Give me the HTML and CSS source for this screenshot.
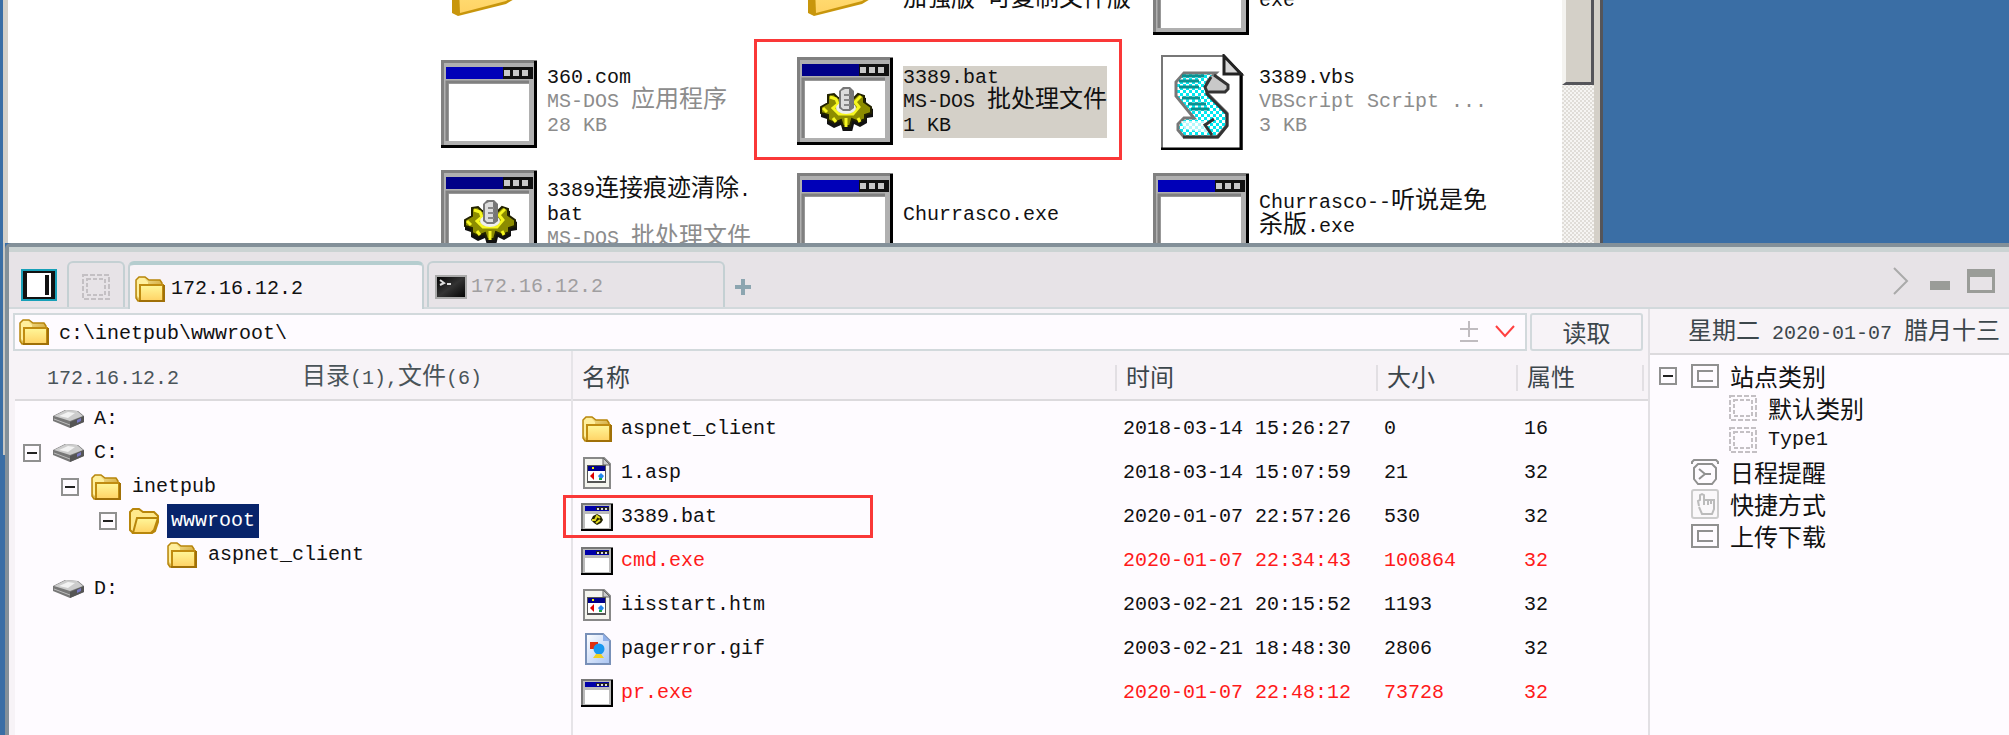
FILE: index.html
```html
<!DOCTYPE html>
<html lang="zh-CN">
<head>
<meta charset="utf-8">
<title>172.16.12.2</title>
<link rel="stylesheet" href="styles.css">
</head>
<body>
<svg class="defs" aria-hidden="true">
  <defs>
    <linearGradient id="gold" x1="0" y1="0" x2="0" y2="1"><stop offset="0" stop-color="#fff79a"/><stop offset="1" stop-color="#ffd264"/></linearGradient>
    <linearGradient id="goldBack" x1="0" y1="0" x2="1" y2="1"><stop offset="0" stop-color="#fff3a8"/><stop offset="1" stop-color="#c08a10"/></linearGradient>
    <linearGradient id="paper" x1="0" y1="0" x2="1" y2="1"><stop offset="0" stop-color="#fff"/><stop offset="1" stop-color="#a9c4f2"/></linearGradient>
    <linearGradient id="screen" x1="0" y1="0" x2="1" y2="1"><stop offset="0" stop-color="#000"/><stop offset=".5" stop-color="#333"/><stop offset="1" stop-color="#000"/></linearGradient>
    <pattern id="weave" width="6" height="6" patternUnits="userSpaceOnUse"><rect width="6" height="6" fill="#fff"/><rect width="3" height="3" fill="#00e8f0"/><rect x="3" y="3" width="3" height="3" fill="#00e8f0"/></pattern>
    <symbol id="frame" viewBox="0 0 96 88">
      <rect width="96" height="88" fill="#808080"/><rect x="3" y="3" width="90" height="82" fill="#b0b0b0"/>
      <path d="M93 1h3v87H0v-3h93z" fill="#000"/>
      <path d="M6 81V22h82" fill="none" stroke="#808080" stroke-width="3"/>
      <rect x="8" y="24" width="80" height="57" fill="#fff"/>
    </symbol>
    <symbol id="buttons" viewBox="0 0 30 12">
      <rect width="30" height="12" fill="#111"/><path d="M1 3h6v6H1zM10 3h6v6h-6zM19 3h6v6h-6z" fill="#c8c8c8"/>
    </symbol>
    <symbol id="exe" viewBox="0 0 96 96">
      <use href="#frame" y="6" width="96" height="88"/><rect x="5" y="13" width="86" height="12" fill="#0000b8"/><use href="#buttons" x="62" y="13" width="30" height="12"/>
    </symbol>
    <symbol id="gear" viewBox="0 0 54 44">
      <path d="M9 9l6-1 4 4h16l4-4 7 2v6l7 5v8l-6 1v5l-7 4-6-3-2 8h-9l-2-7-7 3-7-4v-5l-6-2v-8l6-4z" fill="#111" transform="translate(1 1)"/>
      <path d="M9 8l6-1 4 4h16l4-4 6 2v6l7 5v6l-6 2v4l-6 3-7-3-2 7h-7l-2-6-7 3-6-3v-5l-7-2v-6l7-4z" fill="#8c8c00" stroke="#222200" stroke-width="2"/>
      <path d="M11 10l6 2 2 5-5 4 6 6h14l6-7-4-5 6-6M4 21l4 4M14 31l3 4M27 31v9M39 31l2 4" fill="none" stroke="#f6f620" stroke-width="3"/>
      <ellipse cx="27" cy="21" rx="10" ry="6" fill="#eee"/>
      <path d="M20 4l4-4h7l4 4v17l-4 3h-7l-4-3z" fill="#777"/><path d="M22 4l4-2h4v20h-6l-2-2z" fill="#ddd"/><path d="M25 8h6M25 13h6M25 18h6" stroke="#888" stroke-width="2"/>
    </symbol>
    <symbol id="bat" viewBox="0 0 96 96">
      <use href="#frame" y="3" width="96" height="88"/><rect x="5" y="10" width="86" height="12" fill="#000088"/><use href="#buttons" x="62" y="10" width="30" height="12"/><use href="#gear" x="22" y="33" width="54" height="44"/>
    </symbol>
    <symbol id="vbs" viewBox="0 0 96 96">
      <path d="M9 2h61l19 18v75H9z" fill="#fff" stroke="#777" stroke-width="2"/><path d="M88 19v76H8" fill="none" stroke="#000" stroke-width="3"/>
      <path d="M71 2v18h17z" fill="#d8d8d8" stroke="#222" stroke-width="3"/>
      <path d="M31 19h32l-9 9v11l20 20v12L64 83H31l-6-7v-6l6-6h10L23 42V28z" fill="url(#weave)" stroke="#777" stroke-width="3"/>
      <path d="M28 67h24l3 12-24-4z" fill="#fff" opacity=".7"/>
      <path d="M29 22h22M26 27h20M26 33h20M29 44h18M35 50h18M38 55h18" stroke="#0a9090" stroke-width="3"/>
      <path d="M55 24l7-3 13 10-3 7H55l-2-6z" fill="#c8c8c8"/>
      <path d="M61 21l14 10v4l-3 3H54v2l20 20v12L65 83H30M54 38l-2-5 6-10M61 65l-9 6 7 10" fill="none" stroke="#333" stroke-width="3"/>
    </symbol>
    <symbol id="bigfolder" viewBox="0 0 96 96">
      <path d="M11 0v72l6 3 48-12 10-6 3-20V0z" fill="#c8960c"/><path d="M16 0l3 72 46-12 8-5V0z" fill="url(#gold)"/>
    </symbol>
    <symbol id="folder" viewBox="0 0 30 26">
      <path d="M1 4l3-3h6l4 3h11l2 3v18H3l-2-3z" fill="url(#goldBack)" stroke="#b8860b" stroke-width="1.5"/>
      <path d="M2 5l3-3h4l4 4v3l-7 1-2 12-2-2z" fill="#ffef9c"/>
      <path d="M5 9h23v16H5z" fill="url(#gold)" stroke="#c08c10" stroke-width="2"/><path d="M4 25h25V9" fill="none" stroke="#a07008" stroke-width="2"/>
    </symbol>
    <symbol id="open" viewBox="0 0 30 26">
      <path d="M1 4l3-3h6l4 3h11l4 4v6l-3 9-3 2H4l-3-3z" fill="#ffe98c" stroke="#b8860b" stroke-width="2"/>
      <path d="M8 10h21l-4 12-3 3H4z" fill="url(#gold)" stroke="#b8860b" stroke-width="2"/>
    </symbol>
    <symbol id="drive" viewBox="0 0 32 20">
      <path d="M0 7l12-6 13 1 6 5v6l-14 6L0 12z" fill="#777"/><path d="M1 7l12-6 11 1 6 5-13 5z" fill="#ccc"/><path d="M6 7l9-4 7 1-7 5z" fill="#f2f2f2"/>
      <path d="M17 13v6l14-6V7z" fill="#555"/><path d="M24 11l4-2v3l-4 2z" fill="#7777c0"/><path d="M1 10l16 6" stroke="#bbb"/>
    </symbol>
    <symbol id="sexe" viewBox="0 0 32 28">
      <path d="M0 0h32v28H0z" fill="#777"/><path d="M2 2h28v24H2z" fill="#bbb"/><path d="M30 1h2v27H0v-2h30z" fill="#000"/>
      <path d="M4 3h24v5H4z" fill="#0000a8"/><path d="M15 4h13v3H15z" fill="#222"/><path d="M16 5h2v2h-2zM20 5h2v2h-2zM24 5h2v2h-2z" fill="#ddd"/><path d="M4 11h24v14H4z" fill="#fff"/>
    </symbol>
    <symbol id="sbat" viewBox="0 0 32 28">
      <use href="#sexe" width="32" height="28"/><path d="M12 13l4-2 4 2 2 4-2 3-4 2-3-2-3-3z" fill="#222200"/><path d="M11 17h3l2-4 3 2M15 20l4-3" stroke="#e0d820" stroke-width="2" fill="none"/>
    </symbol>
    <symbol id="web" viewBox="0 0 32 32">
      <path d="M3 1h20l6 6v24H3z" fill="#f4f4ee" stroke="#888" stroke-width="2"/><path d="M22 1v7h7z" fill="#ccc" stroke="#666"/>
      <path d="M6 8h19v18H6z" fill="#555"/><path d="M7 14h17v10H7z" fill="#fff"/><path d="M7 9h17v5H7z" fill="#00008a"/><path d="M11 10h2v2h-2z" fill="#ee0"/>
      <path d="M9 19l4-4v8z" fill="#d00"/><path d="M17 19l3-3 3 3-3 4z" fill="#28e"/><path d="M18 21h3v2h-3z" fill="#1a4"/>
    </symbol>
    <symbol id="gif" viewBox="0 0 32 32">
      <path d="M5 1h17l7 7v23H5z" fill="url(#paper)" stroke="#7890b8" stroke-width="2"/><path d="M22 1v7h7z" fill="#8fb0e8"/>
      <path d="M9 9h8v7H9z" fill="#e03010"/><circle cx="18" cy="16" r="5.500" fill="#1898f0"/><path d="M12 25l3-4h5l3 4z" fill="#f0d020"/>
    </symbol>
    <symbol id="term" viewBox="0 0 32 24">
      <path d="M1 1h30v22H1z" fill="url(#screen)" stroke="#aaa" stroke-width="2"/><path d="M5 5l4 3-4 2M12 9h4" fill="none" stroke="#ddd" stroke-width="2"/>
    </symbol>
    <symbol id="dashed" viewBox="0 0 28 26">
      <g fill="none" stroke="#c4c0c4" stroke-width="2"><path d="M1 1h26v24H1z" stroke-dasharray="5 2"/><path d="M5 5h18v16H5z" stroke-dasharray="4 2"/></g>
    </symbol>
    <symbol id="cbox" viewBox="0 0 28 24">
      <path d="M1 1h26v22H1z" fill="none" stroke="#909090" stroke-width="2"/><path d="M22 7H7v10h15" fill="none" stroke="#909090" stroke-width="2"/>
    </symbol>
    <symbol id="clock" viewBox="0 0 28 26">
      <g fill="none" stroke="#909090" stroke-width="2"><path d="M1 5V3l2-2h22l2 2v2M7 5h14l4 4v11l-4 5H7l-4-5V9z"/><path d="M8 10l6 5-6 5M14 15h6"/></g>
    </symbol>
    <symbol id="hand" viewBox="0 0 28 30">
      <rect x="1" y="1" width="26" height="28" rx="2" fill="#faf8fa" stroke="#ccc" stroke-width="2"/>
      <path d="M8 17l-1-5 2-1V6l2-1 2 1v5h10v9l-2 5H11l-3-7M13 11v5M17 11v5M20 11v4" fill="none" stroke="#bbb" stroke-width="2"/>
    </symbol>
  </defs>
</svg>

<section class="explorer">
  <div class="files">
    <div class="tile"><svg class="big"><use href="#bigfolder"/></svg></div>
    <div class="tile"><svg class="big"><use href="#bigfolder"/></svg><div class="label"><br><span class="cj">加强版</span> <span class="cj">可复制文件版</span></div></div>
    <div class="tile"><svg class="big"><use href="#exe"/></svg><div class="label"><br>exe</div></div>

    <div class="tile"><svg class="big"><use href="#exe"/></svg><div class="label">360.com<div class="meta">MS-DOS <span class="cj">应用程序</span><br>28 KB</div></div></div>
    <div class="tile marked"><svg class="big"><use href="#bat"/></svg><div class="label picked">3389.bat<br>MS-DOS <span class="cj">批处理文件</span><br>1 KB</div></div>
    <div class="tile"><svg class="big"><use href="#vbs"/></svg><div class="label">3389.vbs<div class="meta">VBScript Script ...<br>3 KB</div></div></div>

    <div class="tile"><svg class="big"><use href="#bat"/></svg><div class="label">3389<span class="cj">连接痕迹清除</span>.<br>bat<div class="meta">MS-DOS <span class="cj">批处理文件</span></div></div></div>
    <div class="tile"><svg class="big"><use href="#exe"/></svg><div class="label">Churrasco.exe</div></div>
    <div class="tile"><svg class="big"><use href="#exe"/></svg><div class="label">Churrasco--<span class="cj">听说是免</span><br><span class="cj">杀版</span>.exe</div></div>
  </div>
  <div class="scroll"><div class="thumb"></div></div>
</section>

<div class="lower">
  <div class="gutter"></div>
  <main class="app">
    <header class="tabs">
      <button class="panel-btn" aria-label="面板"><svg width="36" height="32" viewBox="0 0 36 32"><path d="M1 1h34v30H1z" fill="#111" stroke="#18a0b8" stroke-width="2"/><path d="M6 4h24v24H6z" fill="#fff"/><path d="M24 6h4v20h-4z" fill="#111"/></svg></button>
      <button class="tab blank" aria-label="空白"><svg width="28" height="26"><use href="#dashed"/></svg></button>
      <button class="tab active"><svg width="30" height="26"><use href="#folder"/></svg>172.16.12.2</button>
      <button class="tab"><svg width="32" height="24"><use href="#term"/></svg>172.16.12.2</button>
      <button class="add" aria-label="新建"><svg width="16" height="16"><path d="M8 0v16M0 8h16" stroke="#8ca5b0" stroke-width="4"/></svg></button>
      <div class="controls">
        <button aria-label="更多"><svg width="20" height="28"><path d="M1 1l13 13L1 27" fill="none" stroke="#aaa" stroke-width="2"/></svg></button>
        <button aria-label="最小化"><svg width="20" height="28"><path d="M0 14h20v9H0z" fill="#9a9c98"/></svg></button>
        <button aria-label="最大化"><svg width="28" height="24"><path d="M0 0h28v24H0zM3 8v13h22V8z" fill="#9a9c98" fill-rule="evenodd"/></svg></button>
      </div>
    </header>

    <div class="body">
      <div class="work">
        <form class="bar">
          <div class="address">
            <svg width="30" height="26"><use href="#folder"/></svg>
            <input type="text" aria-label="路径" value="c:\inetpub\wwwroot\">
            <button type="button" aria-label="增减"><svg width="18" height="22"><path d="M9 0v16M0 8h18M0 20h18" stroke="#c0bcc0" stroke-width="2"/></svg></button>
            <button type="button" aria-label="下拉"><svg width="20" height="14"><path d="M1 1l9 10 9-10" fill="none" stroke="#ff4040" stroke-width="2"/></svg></button>
          </div>
          <button type="button" class="read cj">读取</button>
        </form>
        <div class="split">
          <section class="tree-pane">
            <div class="head"><span>172.16.12.2</span><span><span class="cj">目录</span>(1),<span class="cj">文件</span>(6)</span></div>
            <ul class="tree">
              <li><svg class="drive"><use href="#drive"/></svg><span>A:</span></li>
              <li><button class="toggle" aria-label="折叠"></button><svg class="drive"><use href="#drive"/></svg><span>C:</span></li>
              <li class="l1"><button class="toggle" aria-label="折叠"></button><svg class="fold"><use href="#folder"/></svg><span>inetpub</span></li>
              <li class="l2"><button class="toggle" aria-label="折叠"></button><svg class="fold"><use href="#open"/></svg><span class="sel">wwwroot</span></li>
              <li class="l3"><svg class="fold"><use href="#folder"/></svg><span>aspnet_client</span></li>
              <li><svg class="drive"><use href="#drive"/></svg><span>D:</span></li>
            </ul>
          </section>
          <section class="list-pane">
            <table class="list">
              <colgroup><col><col class="c-time"><col class="c-size"><col class="c-attr"></colgroup>
              <thead><tr><th>名称</th><th>时间</th><th>大小</th><th>属性</th></tr></thead>
              <tbody>
                <tr><td><div class="name"><svg height="26"><use href="#folder"/></svg>aspnet_client</div></td><td>2018-03-14 15:26:27</td><td>0</td><td>16</td></tr>
                <tr><td><div class="name"><svg height="32"><use href="#web"/></svg>1.asp</div></td><td>2018-03-14 15:07:59</td><td>21</td><td>32</td></tr>
                <tr><td><div class="name boxed"><svg height="28"><use href="#sbat"/></svg>3389.bat</div></td><td>2020-01-07 22:57:26</td><td>530</td><td>32</td></tr>
                <tr class="hot"><td><div class="name"><svg height="28"><use href="#sexe"/></svg>cmd.exe</div></td><td>2020-01-07 22:34:43</td><td>100864</td><td>32</td></tr>
                <tr><td><div class="name"><svg height="32"><use href="#web"/></svg>iisstart.htm</div></td><td>2003-02-21 20:15:52</td><td>1193</td><td>32</td></tr>
                <tr><td><div class="name"><svg height="32"><use href="#gif"/></svg>pagerror.gif</div></td><td>2003-02-21 18:48:30</td><td>2806</td><td>32</td></tr>
                <tr class="hot"><td><div class="name"><svg height="28"><use href="#sexe"/></svg>pr.exe</div></td><td>2020-01-07 22:48:12</td><td>73728</td><td>32</td></tr>
              </tbody>
            </table>
          </section>
        </div>
      </div>
      <aside class="side">
        <div class="date"><span class="cj">星期二</span> 2020-01-07 <span class="cj">腊月十三</span></div>
        <ul class="tree cats">
          <li><button class="toggle" aria-label="折叠"></button><svg height="24"><use href="#cbox"/></svg><span class="cj">站点类别</span></li>
          <li class="l1"><svg height="26"><use href="#dashed"/></svg><span class="cj">默认类别</span></li>
          <li class="l1"><svg height="26"><use href="#dashed"/></svg><span>Type1</span></li>
          <li><svg height="26"><use href="#clock"/></svg><span class="cj">日程提醒</span></li>
          <li><svg height="30"><use href="#hand"/></svg><span class="cj">快捷方式</span></li>
          <li><svg height="24"><use href="#cbox"/></svg><span class="cj">上传下载</span></li>
        </ul>
      </aside>
    </div>
  </main>
</div>
</body>
</html>
```

FILE: styles.css
```css
*, *::before, *::after { box-sizing: border-box; }

body {
  margin: 0;
  height: 100vh;
  display: flex;
  flex-direction: column;
  overflow: hidden;
  background: #3a6ea5;
  color: #111;
  font-family: "Liberation Mono", "Noto Sans CJK SC", monospace;
  font-size: 20px;
  line-height: 24px;
}

button, input {
  font: inherit;
  color: inherit;
  background: none;
  border: 0;
  padding: 0;
}

svg { display: block; flex: none; }
.defs { position: absolute; width: 0; height: 0; }
.cj { font-family: "Noto Sans CJK SC", sans-serif; font-size: 24px; line-height: 24px; }
.label .cj, .head .cj, .date .cj { line-height: 0; }

/* file explorer window */
.explorer {
  flex: none;
  height: 243px;
  margin-left: 3px;
  width: 1600px;
  max-width: 100%;
  display: flex;
  overflow: hidden;
  background: #fff;
  border-left: 5px solid #d4d0c8;
  border-right: 3px solid #55555a;
}
.files {
  flex: 1;
  display: grid;
  grid-template-columns: repeat(3, 356px);
  grid-auto-rows: 113px;
  margin-top: -68px;
  padding-left: 433px;
}
.tile { display: flex; align-items: center; gap: 10px; position: relative; white-space: nowrap; }
.big { width: 96px; height: 96px; }
.label { line-height: 24px; }
.meta { color: #8c8c8c; }
.picked { background: #d4d0c8; }
.marked::after {
  content: "";
  position: absolute;
  inset: -6px 31px -2px -43px;
  border: 3px solid #fa3838;
}
.scroll {
  width: 38px;
  border-right: 6px solid #d4d0c8;
  background: repeating-conic-gradient(#e0ddd8 0 25%, #f6f5f3 0 50%) 0 0 / 4px 4px;
}
.thumb {
  height: 85px;
  background: #d4d0c8;
  border-left: 4px solid #f4f3f0;
  border-right: 3px solid #55555a;
  border-bottom: 3px solid #55555a;
}

/* manager window */
.lower { flex: 1; display: grid; grid-template-columns: 5px 1fr; min-height: 0; }
.gutter { height: 212px; border-right: 2px solid #c8c8c4; }
.app {
  display: flex;
  flex-direction: column;
  min-width: 0;
  background: #f7f3f7;
  border-top: 4px solid #839099;
  border-left: 4px solid #839099;
  border-top-left-radius: 6px;
}
.tabs {
  flex: none;
  display: flex;
  align-items: flex-end;
  height: 62px;
  padding-left: 12px;
  background: #e7e3e7;
  border-top: 5px solid #cbd3d3;
  border-bottom: 2px solid #d2d9dc;
}
.panel-btn { margin: 0 10px 6px 0; }
.tab {
  display: flex;
  align-items: center;
  gap: 4px;
  width: 298px;
  height: 46px;
  padding: 4px 0 0 6px;
  border: 2px solid #c4d0d3;
  border-bottom: 0;
  border-radius: 6px 6px 0 0;
  color: #a09ea0;
}
.blank { width: 58px; padding-left: 13px; margin-right: 3px; }
.active {
  width: 296px;
  height: 48px;
  margin: 0 3px -2px 0;
  padding-left: 5px;
  background: #f7f3f7;
  border-top: 4px solid #b5cdcf;
  color: #111;
  gap: 6px;
}
.add { margin: 0 0 12px 10px; }
.controls { display: flex; align-items: center; gap: 17px; margin: 0 14px 12px auto; }

.body { flex: 1; display: grid; grid-template-columns: 1fr 361px; min-height: 0; }
.work { display: flex; flex-direction: column; min-width: 0; }
.bar { display: flex; gap: 3px; padding: 4px 5px 0 4px; }
.address {
  flex: 1;
  display: flex;
  align-items: center;
  gap: 17px;
  height: 38px;
  padding: 0 10px 0 4px;
  background: #fefbff;
  border: 2px solid #d2d9dc;
}
.address input { flex: 1; min-width: 0; height: 28px; padding-top: 2px; margin-left: -7px; outline: 0; }
.read { width: 113px; height: 38px; border: 2px solid #d2d9dc; border-radius: 3px; color: #3c464b; }
.split { flex: 1; display: grid; grid-template-columns: 564px 1fr; }
.tree-pane { margin-left: 6px; border-right: 2px solid #e6e4e8; background: #fefbff; }
.head {
  display: flex;
  align-items: center;
  justify-content: space-between;
  height: 50px;
  padding: 8px 89px 0 32px;
  background: #f7f3f7;
  border-bottom: 2px solid #dcdadd;
  color: #4a5459;
}
.tree { list-style: none; margin: 0; padding: 1px 0 0 8px; }
.tree li {
  display: grid;
  grid-template-columns: 18px 32px auto;
  column-gap: 12px;
  justify-content: start;
  align-items: center;
  height: 34px;
}
.tree li > svg { grid-column: 2; }
.tree li > span { grid-column: 3; margin-left: -3px; }
.tree .l1 { padding-left: 38px; }
.tree .l2 { padding-left: 76px; }
.tree .l3 { padding-left: 114px; }
.drive { width: 32px; height: 20px; }
.fold { width: 30px; height: 26px; }
.tree li > .sel { background: #08246b; color: #fff; line-height: 34px; padding: 0 4px; margin-left: -6px; }
.toggle {
  width: 18px;
  height: 18px;
  border: 2px solid #909090;
  background: linear-gradient(#222, #222) center / 10px 2px no-repeat;
}

.list-pane { background: #fefbff; }
.list { width: 100%; table-layout: fixed; border-collapse: separate; border-spacing: 0; }
.c-time { width: 261px; }
.c-size { width: 140px; }
.c-attr { width: 132px; }
th {
  height: 50px;
  padding: 2px 0 0 11px;
  text-align: left;
  font-family: "Noto Sans CJK SC", sans-serif;
  font-size: 24px;
  font-weight: 400;
  color: #3c464b;
  border-bottom: 2px solid #dcdadd;
  background: linear-gradient(#e2dfe3, #e2dfe3) 0 14px / 2px 26px no-repeat #f7f3f7;
}
th:first-child { padding-left: 9px; background: #f7f3f7; }
th:last-child {
  background:
    linear-gradient(#e2dfe3, #e2dfe3) 0 14px / 2px 26px no-repeat,
    linear-gradient(#e2dfe3, #e2dfe3) 126px 14px / 2px 26px no-repeat #f7f3f7;
}
tbody::before { content: ""; display: block; height: 6px; }
td { height: 44px; padding: 0 0 0 8px; }
.name { display: flex; align-items: center; gap: 8px; height: 44px; position: relative; }
.name svg { width: 32px; }
.boxed::after {
  content: "";
  position: absolute;
  left: -18px;
  top: 0;
  width: 310px;
  height: 43px;
  border: 3px solid #fa3838;
}
.hot { color: #ff1a1a; }

.side { border-left: 2px solid #e2e0e4; background: #fefbff; }
.date {
  height: 46px;
  padding: 13px 9px 0 0;
  text-align: right;
  white-space: nowrap;
  background: #f7f3f7;
  border-bottom: 2px solid #dcdadd;
  color: #3c464b;
}
.cats { padding: 5px 0 0 9px; }
.cats li { height: 32px; grid-template-columns: 18px 28px auto; column-gap: 14px; }
.cats li > svg { width: 28px; }
```
